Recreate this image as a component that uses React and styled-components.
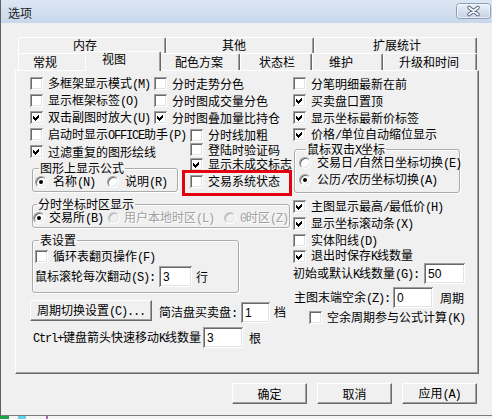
import React from "react";
import styled, { createGlobalStyle } from "styled-components";

const face = "#f0f0f0";
const shade = "#a0a0a0";
const dark = "#696969";

const GlobalStyle = createGlobalStyle`
  html, body { margin: 0; padding: 0; background: #fff; }
  body {
    font-family: "Noto Sans CJK SC", sans-serif;
    font-size: 12px;
    line-height: 14px;
    color: #000;
  }
`;

/* text: ascii runs are drawn in a narrow monospace, like SimSun's half-width glyphs */
const Latin = styled.span`
  font-family: "Liberation Mono", monospace;
  letter-spacing: -1.2px;
`;

const T = ({ children }) =>
  String(children)
    .split(/([\x20-\x7e]+)/)
    .map((p, i) =>
      p === "" ? null : /[\x20-\x7e]/.test(p) ? (
        <Latin key={i}>{p}</Latin>
      ) : (
        <React.Fragment key={i}>{p}</React.Fragment>
      )
    );

/**
 * Window frame
 */
const Window = styled.div`
  width: 492px;
  height: 416px;
  box-sizing: border-box;
  background: ${face};
  border-left: 1px solid #5f5f5f;
  border-bottom: 1px solid #7a7a7a;
  display: flex;
  flex-direction: column;
`;

const TitleBar = styled.div`
  height: 23px;
  flex: none;
  display: flex;
  align-items: flex-start;
  justify-content: space-between;
  background: linear-gradient(#dce7f5, #c8d7eb);
  padding: 0 1px 0 7px;
`;

const TitleText = styled.div`
  line-height: 12px;
  margin-top: 7px;
  color: #1a1a1a;
`;

const CloseBox = styled.div`
  margin-top: 3px;
  width: 35px;
  height: 16px;
  flex: none;
`;

const CloseButton = () => (
  <CloseBox>
    <svg width="35" height="16" viewBox="0 0 35 16">
      <defs>
        <linearGradient id="cb" x1="0" y1="0" x2="0" y2="1">
          <stop offset="0" stopColor="#eef3fa" />
          <stop offset="0.5" stopColor="#d6e0ee" />
          <stop offset="1" stopColor="#c3d1e4" />
        </linearGradient>
      </defs>
      <rect x="0.5" y="0.5" width="34" height="15" rx="3" fill="url(#cb)" stroke="#8c9db5" />
      <rect x="1.5" y="1.5" width="32" height="13" rx="2" fill="none" stroke="#f7f9fc" strokeOpacity="0.7" />
      <path d="M13 4.5 L22 11.5 M22 4.5 L13 11.5" stroke="#55657c" strokeWidth="3.6" strokeLinecap="round" />
      <path d="M13 4.5 L22 11.5 M22 4.5 L13 11.5" stroke="#ffffff" strokeWidth="1.7" strokeLinecap="round" />
    </svg>
  </CloseBox>
);

/**
 * Tabs
 */
const Tabs = styled.div`
  margin: 14px 0 0 14px;
  width: 464px;
  flex: none;
`;

const TabRow = styled.div`
  display: flex;
  height: ${({ h }) => h}px;
  padding: 0 2px 0 3px;
`;

const Tab = styled.div`
  box-sizing: border-box;
  flex: none;
  width: ${({ w }) => w}px;
  padding-left: ${({ pl }) => pl}px;
  border-top: 1px solid #fff;
  border-left: 1px solid #fff;
  border-right: 1px solid ${dark};
  box-shadow: inset -1px 0 0 ${shade};
  border-radius: 2px 2px 0 0;
  background: ${face};
  line-height: ${({ lh }) => lh}px;
  white-space: nowrap;
`;

const ActiveTab = styled(Tab)`
  width: ${({ w }) => w + 4}px;
  padding-left: ${({ pl }) => pl + 2}px;
  margin: -2px -2px -1px;
  height: 20px;
  line-height: 14px;
  position: relative;
  z-index: 1;
`;

const Panel = styled.div`
  box-sizing: border-box;
  height: 304px;
  border: 1px solid;
  border-color: #fff ${dark} ${dark} #fff;
  box-shadow: inset -1px -1px 0 ${shade};
  padding: 4px 0 0 14px;
  display: flex;
`;

/**
 * Controls
 */
const Col = styled.div`
  display: flex;
  flex-direction: column;
  flex: none;
  width: ${({ w }) => (w ? `${w}px` : "auto")};
  margin: ${({ m }) => m || 0};
  height: ${({ h }) => (h ? `${h}px` : "auto")};
`;

const Cols = styled(Col)`
  flex-direction: row;
`;

const Line = styled.div`
  display: flex;
  align-items: ${({ top }) => (top ? "flex-start" : "center")};
  height: ${({ h }) => h || 17}px;
  margin: ${({ m }) => m || 0};
  white-space: nowrap;
  flex: none;
  position: relative;
`;

const Box = styled.span`
  width: 13px;
  height: 13px;
  flex: none;
  background: #fff;
  box-shadow: inset 1px 1px 0 ${shade}, inset -1px -1px 0 #fff,
    inset 2px 2px 0 ${dark}, inset -2px -2px 0 #e3e3e3;
  margin-right: 5px;
  display: block;
`;

const Tick = () => (
  <svg width="13" height="13" viewBox="0 0 13 13" shapeRendering="crispEdges">
    <path d="M3 5 L5 7 L9 3 L9 6 L5 10 L3 8 Z" fill="#000" />
  </svg>
);

const Check = ({ on, children, h, m }) => (
  <Line h={h} m={m}>
    <Box>{on && <Tick />}</Box>
    <span>
      <T>{children}</T>
    </span>
  </Line>
);

const Dot = styled.span`
  width: 12px;
  height: 12px;
  flex: none;
  box-sizing: border-box;
  border-radius: 50%;
  background: ${({ off }) => (off ? face : "#fff")};
  border: 1px solid;
  border-color: ${({ off }) => (off ? "#c8c8c8" : shade)} #fff #fff
    ${({ off }) => (off ? "#c8c8c8" : shade)};
  box-shadow: inset 1px 1px 0 ${({ off }) => (off ? "#b8b8b8" : dark)},
    inset -1px -1px 0 #e3e3e3;
  margin-right: ${({ gap }) => gap ?? 6}px;
  display: flex;
  align-items: center;
  justify-content: center;
  &::after {
    content: "";
    width: 4px;
    height: 4px;
    border-radius: 50%;
    background: #000;
    display: ${({ on }) => (on ? "block" : "none")};
  }
`;

const RadioItem = styled.span`
  display: flex;
  align-items: center;
  flex: none;
  width: ${({ w }) => (w ? `${w}px` : "auto")};
  color: ${({ off }) => (off ? shade : "#000")};
  text-shadow: ${({ off }) => (off ? "1px 1px 0 #fff" : "none")};
`;

const Radio = ({ on, off, w, gap, children }) => (
  <RadioItem w={w} off={off}>
    <Dot on={on} off={off} gap={gap} />
    <span>
      <T>{children}</T>
    </span>
  </RadioItem>
);

const Group = styled.fieldset`
  box-sizing: border-box;
  min-width: 0;
  width: ${({ w }) => w}px;
  margin: ${({ m }) => m || 0};
  padding: 0 0 ${({ pb }) => pb || 0}px ${({ pl }) => pl || 0}px;
  border: 1px solid #ababab;
  border-radius: 3px;
  box-shadow: inset 1px 1px 0 #fff, 1px 1px 0 #fff;
  flex: none;
`;

const Legend = styled.legend`
  margin-left: ${({ ml }) => ml || 4}px;
  padding: 0 1px;
  height: 12px;
  line-height: 12px;
  white-space: nowrap;
`;

const Label = styled.span`
  display: inline-block;
  flex: none;
  width: ${({ w }) => (w ? `${w}px` : "auto")};
  margin-left: ${({ ml }) => ml || 0}px;
`;

const Field = styled.span`
  display: block;
  flex: none;
  box-sizing: border-box;
  width: ${({ w }) => w}px;
  height: 21px;
  margin: ${({ m }) => m || 0};
  background: #fff;
  box-shadow: inset 1px 1px 0 ${shade}, inset -1px -1px 0 #fff,
    inset 2px 2px 0 ${dark}, inset -2px -2px 0 #e3e3e3;
  font-family: "Liberation Sans", sans-serif;
  font-size: 12px;
  line-height: 14px;
  padding: 4px 0 0 4px;
`;

const Button = styled.button`
  box-sizing: border-box;
  flex: none;
  width: ${({ w }) => w || 75}px;
  height: ${({ h }) => h || 21}px;
  margin: ${({ m }) => m || 0};
  padding: ${({ pl }) => (pl ? `0 0 0 ${pl}px` : 0)};
  text-align: ${({ pl }) => (pl ? "left" : "center")};
  background: ${face};
  border: 1px solid;
  border-color: #fff ${dark} ${dark} #fff;
  box-shadow: inset -1px -1px 0 ${shade};
  font: inherit;
  line-height: 17px;
  color: #000;
  white-space: nowrap;
`;

const Mark = styled.div`
  position: absolute;
  left: -8px;
  top: -2px;
  width: 110px;
  height: 26px;
  box-sizing: border-box;
  border: 3px solid #e3000f;
  pointer-events: none;
`;

const Footer = styled.div`
  display: flex;
  margin: 9px 0 0 231px;
  gap: 10px;
`;

const Desktop = styled.div`
  height: 3px;
  background: linear-gradient(
    90deg,
    #1aa34a 0 9px,
    #f4f4f4 9px 18px,
    #5fd3e8 18px 26px,
    #f4f4f4 26px 46px,
    #b064c8 46px 48px,
    #f4f4f4 48px 100%
  );
`;

const backTabs = [
  { label: "内存", w: 148, pl: 54 },
  { label: "其他", w: 148, pl: 55 },
  { label: "扩展统计", w: 163, pl: 58 },
];

const frontTabs = [
  { label: "常规", w: 69, pl: 14 },
  { label: "视图", w: 72, pl: 14, active: true },
  { label: "配色方案", w: 81, pl: 15 },
  { label: "状态栏", w: 72, pl: 18 },
  { label: "维护", w: 71, pl: 16 },
  { label: "升级和时间", w: 94, pl: 15 },
];

export default function App() {
  return (
    <>
      <GlobalStyle />
      <Window>
        <TitleBar>
          <TitleText>选项</TitleText>
          <CloseButton />
        </TitleBar>

        <Tabs>
          <TabRow h={16}>
            {backTabs.map((t) => (
              <Tab key={t.label} w={t.w} pl={t.pl} lh={14}>
                {t.label}
              </Tab>
            ))}
          </TabRow>
          <TabRow h={17}>
            {frontTabs.map((t) =>
              t.active ? (
                <ActiveTab key={t.label} w={t.w} pl={t.pl}>
                  {t.label}
                </ActiveTab>
              ) : (
                <Tab key={t.label} w={t.w} pl={t.pl} lh={16}>
                  {t.label}
                </Tab>
              )
            )}
          </TabRow>

          <Panel>
            <Col w={263}>
              <Cols h={123}>
                <Col w={124}>
                  <Check>多框架显示模式(M)</Check>
                  <Check>显示框架标签(O)</Check>
                  <Check on>双击副图时放大(U)</Check>
                  <Check>启动时显示OFFICE助手(P)</Check>
                  <Check on>过滤重复的图形绘线</Check>
                  <Group w={146} m="2px 0 0 2px" pl={2} pb={1}>
                    <Legend>图形上显示公式</Legend>
                    <Line h={16}>
                      <Radio on w={72}>
                        名称(N)
                      </Radio>
                      <Radio>说明(R)</Radio>
                    </Line>
                  </Group>
                </Col>
                <Col w={139}>
                  <Check>分时走势分色</Check>
                  <Check>分时图成交量分色</Check>
                  <Check on>分时图叠加量比持仓</Check>
                  <Col m="1px 0 0 36px">
                    <Check h={16}>分时线加粗</Check>
                    <Check h={13}>登陆时验证码</Check>
                    <Check on h={16}>
                      显示未成交标志
                    </Check>
                    <Line h={18}>
                      <Box />
                      <span>交易系统状态</span>
                      <Mark />
                    </Line>
                  </Col>
                </Col>
              </Cols>

              <Group w={258} m="0 0 0 2px" pl={0} pb={1}>
                <Legend>分时坐标时区显示</Legend>
                <Line h={16}>
                  <Radio on w={75} gap={4}>
                    交易所(B)
                  </Radio>
                  <Radio off w={116} gap={4}>
                    用户本地时区(L)
                  </Radio>
                  <Radio off gap={4}>
                    0时区(Z)
                  </Radio>
                </Line>
              </Group>

              <Group w={207} m="6px 0 0 2px" pl={2} pb={5}>
                <Legend>表设置</Legend>
                <Check m="2px 0 0 0">循环表翻页操作(F)</Check>
                <Line h={21} m="1px 0 0 0">
                  <Label w={124}>
                    <T>鼠标滚轮每次翻动(S):</T>
                  </Label>
                  <Field w={33}>3</Field>
                  <Label ml={4}>行</Label>
                </Line>
              </Group>

              <Line h={23} top m="7px 0 0 0">
                <Button w={122}>
                  <T>周期切换设置(C)...</T>
                </Button>
                <Label w={82} ml={7} style={{ lineHeight: "23px" }}>
                  <T>简洁盘买卖盘:</T>
                </Label>
                <Field w={29} m="2px 0 0 0">
                  1
                </Field>
                <Label ml={4} style={{ lineHeight: "23px" }}>
                  档
                </Label>
              </Line>

              <Line h={21} m="4px 0 0 3px">
                <Label w={170}>
                  <T>Ctrl+键盘箭头快速移动K线数量</T>
                </Label>
                <Field w={40}>3</Field>
                <Label ml={6}>根</Label>
              </Line>
            </Col>

            <Col w={180}>
              <Check>分笔明细最新在前</Check>
              <Check on>买卖盘口置顶</Check>
              <Check on>显示坐标最新价标签</Check>
              <Check on>价格/单位自动缩位显示</Check>
              <Group w={166} m="0 0 0 1px" pl={4} pb={3}>
                <Legend ml={7}>
                  <T>鼠标双击X坐标</T>
                </Legend>
                <Line h={16}>
                  <Radio>交易日/自然日坐标切换(E)</Radio>
                </Line>
                <Line h={18}>
                  <Radio on>公历/农历坐标切换(A)</Radio>
                </Line>
              </Group>
              <Check on m="5px 0 0 0">
                主图显示最高/最低价(H)
              </Check>
              <Check on>显示坐标滚动条(X)</Check>
              <Check>实体阳线(D)</Check>
              <Check on h={14}>
                退出时保存K线数量
              </Check>
              <Line h={21} m="0">
                <Label w={131}>
                  <T>初始或默认K线数量(G):</T>
                </Label>
                <Field w={41}>50</Field>
              </Line>
              <Line h={21} m="3px 0 0 1px">
                <Label w={99}>
                  <T>主图末端空余(Z):</T>
                </Label>
                <Field w={40}>0</Field>
                <Label ml={7}>周期</Label>
              </Line>
              <Check m="1px 0 0 16px">空余周期参与公式计算(K)</Check>
            </Col>
          </Panel>
        </Tabs>

        <Footer>
          <Button>确定</Button>
          <Button>取消</Button>
          <Button>
            <T>应用(A)</T>
          </Button>
        </Footer>
      </Window>
      <Desktop />
    </>
  );
}
